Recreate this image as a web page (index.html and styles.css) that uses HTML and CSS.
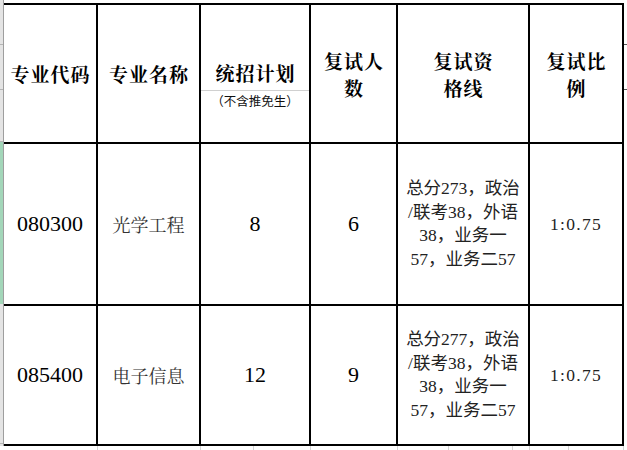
FILE: index.html
```html
<!DOCTYPE html>
<html lang="zh-CN">
<head>
<meta charset="utf-8">
<title>复试信息</title>
<link rel="stylesheet" href="styles.css">
</head>
<body>
<div class="sheet">
  <div class="rowhdr">
    <div class="rh rh-a"></div>
    <div class="rh rh-b"></div>
    <div class="rh rh-c"></div>
    <div class="rh rh-sel"></div>
    <div class="rh rh-d"></div>
    <div class="rh rh-e"></div>
  </div>
  <div class="table">
    <div class="cell hd">专业代码</div>
    <div class="cell hd">专业名称</div>
    <div class="cell split">
      <div class="split-top hd">统招计划</div>
      <div class="split-bot">（不含推免生）</div>
    </div>
    <div class="cell hd two">复试人<br>数</div>
    <div class="cell hd two">复试资<br>格线</div>
    <div class="cell hd two">复试比<br>例</div>

    <div class="cell num">080300</div>
    <div class="cell name">光学工程</div>
    <div class="cell num">8</div>
    <div class="cell num">6</div>
    <div class="cell req">总分273，政治<br>/联考38，外语<br>38，业务一<br>57，业务二57</div>
    <div class="cell ratio">1:0.75</div>

    <div class="cell num">085400</div>
    <div class="cell name">电子信息</div>
    <div class="cell num">12</div>
    <div class="cell num">9</div>
    <div class="cell req">总分277，政治<br>/联考38，外语<br>38，业务一<br>57，业务二57</div>
    <div class="cell ratio">1:0.75</div>
  </div>
  <div class="rightfill">
    <div class="rf"></div>
    <div class="rf"></div>
  </div>
</div>
<div class="bottomfill">
  <span class="bf w93"></span>
  <span class="bf w103"></span>
  <span class="bf w53"></span>
  <span class="bf w57"></span>
  <span class="bf w87"></span>
  <span class="bf w51"></span>
  <span class="bf w64"></span>
  <span class="bf w17"></span>
  <span class="bf w39"></span>
  <span class="bf w55"></span>
</div>
</body>
</html>
```
FILE: styles.css
```css
html, body {
  margin: 0;
  padding: 0;
  background: #fff;
}

body {
  width: 627px;
  height: 450px;
  overflow: hidden;
  font-family: "Liberation Serif", "Noto Sans CJK SC", serif;
  color: #000;
}

.sheet {
  display: flex;
  height: 446px;
}

.rowhdr {
  width: 3px;
  flex: none;
  background: #e4e4e4;
  border-right: 1px solid #9e9e9e;
  display: flex;
  flex-direction: column;
}

.rh {
  border-bottom: 1px solid #b5b5b5;
}

.rh-a { height: 44px; }
.rh-b { height: 44px; }
.rh-c { height: 51px; }
.rh-sel {
  height: 162px;
  background: #a3d6b9;
  border-bottom: none;
}
.rh-d { height: 139px; }
.rh-e { flex: 1; border-bottom: none; }

.table {
  display: grid;
  grid-template-columns: 94px 103px 110px 87px 132px 94px;
  grid-template-rows: 139px 162px 140px;
  margin-top: 3px;
  border-top: 2px solid #000;
  flex: none;
}

.cell {
  box-sizing: border-box;
  border-right: 2px solid #000;
  border-bottom: 2px solid #000;
  display: flex;
  align-items: center;
  justify-content: center;
  text-align: center;
}

.hd {
  font-family: "Noto Serif CJK SC", "Noto Sans CJK SC", sans-serif;
  font-weight: 700;
  font-size: 19px;
  letter-spacing: 1px;
  padding-left: 1px;
  line-height: 28px;
  color: #000;
}

.two {
  line-height: 27.5px;
  padding-top: 1px;
}

.split {
  flex-direction: column;
  align-items: stretch;
  justify-content: flex-start;
}

.split-top {
  box-sizing: border-box;
  height: 86px;
  border-bottom: 1px solid #d0d0d0;
  display: flex;
  align-items: flex-end;
  justify-content: center;
  padding-bottom: 3px;
}

.split-bot {
  font-family: "Noto Sans CJK SC", sans-serif;
  font-size: 12.5px;
  line-height: 18px;
  padding-top: 1px;
  color: #111;
  text-align: center;
  white-space: nowrap;
}

.num {
  font-family: "Liberation Serif", serif;
  font-size: 22px;
  color: #000;
}

.name {
  font-family: "Noto Serif CJK SC", "Noto Sans CJK SC", sans-serif;
  font-size: 18px;
  color: #333;
}

.req {
  font-family: "Liberation Serif", "Noto Sans CJK SC", serif;
  font-size: 17.5px;
  line-height: 23.5px;
  color: #222;
}

.ratio {
  font-family: "Liberation Serif", serif;
  font-size: 17.5px;
  letter-spacing: 1.3px;
  color: #222;
}

.rightfill {
  flex: 1;
  display: flex;
  flex-direction: column;
}

.rf {
  height: 44px;
  border-bottom: 1px solid #555;
}

.bottomfill {
  display: flex;
  height: 4px;
  margin-left: 4px;
}

.bf {
  box-sizing: border-box;
  height: 4px;
  border-right: 1px solid #d4d4d4;
}

.w93 { width: 94px; }
.w103 { width: 103px; }
.w53 { width: 53px; }
.w57 { width: 57px; }
.w87 { width: 87px; }
.w51 { width: 51px; }
.w64 { width: 64px; }
.w17 { width: 17px; }
.w39 { width: 39px; }
.w55 { width: 55px; }
```
